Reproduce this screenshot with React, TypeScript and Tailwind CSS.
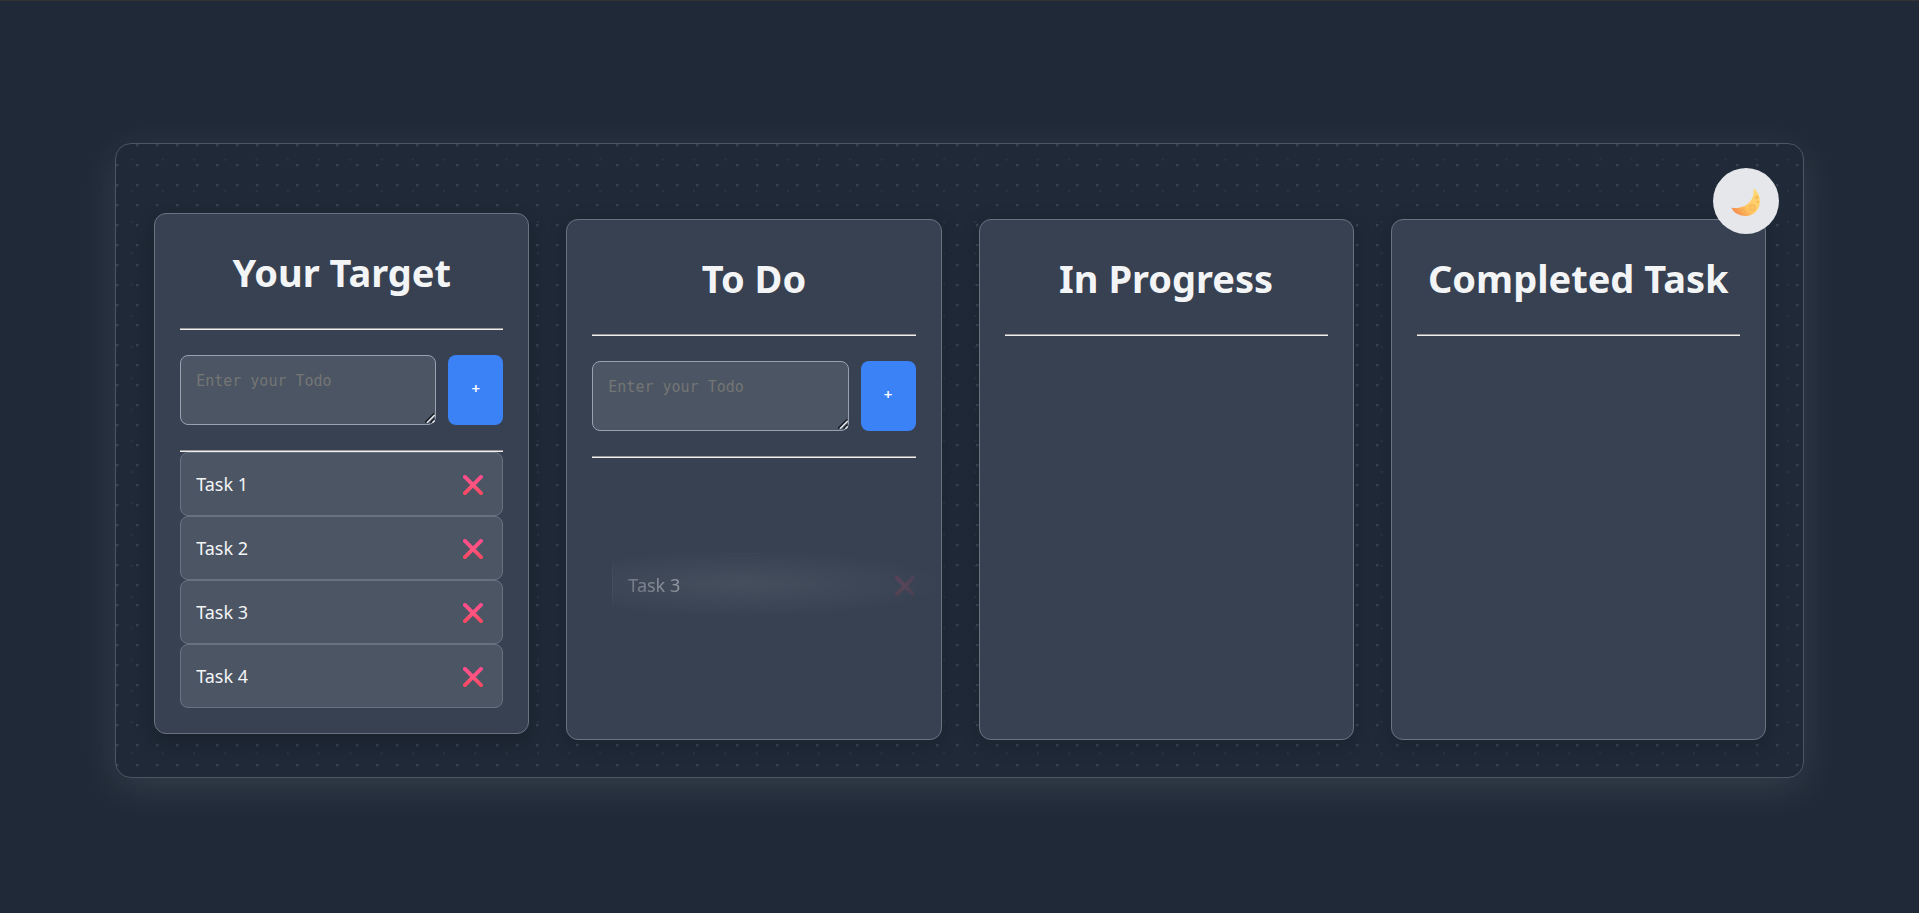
import { useState } from "react";

const CrossIcon = () => (
  <svg viewBox="0 0 20 20" className="block size-5" aria-hidden="true">
    <defs>
      <linearGradient id="cross" x1="0" y1="0" x2="0" y2="1">
        <stop offset="0" stopColor="#ff4a8c" />
        <stop offset="0.5" stopColor="#ff5580" />
        <stop offset="1" stopColor="#f8465c" />
      </linearGradient>
    </defs>
    <path
      d="M0.6 0.6a1.9 1.9 0 0 1 2.7 0L10 7.3l6.700-6.700a1.900 1.900 0 0 1 2.700 2.700L12.700 10l6.700 6.700a1.900 1.900 0 0 1-2.700 2.700L10 12.700l-6.700 6.700a1.900 1.900 0 0 1-2.700-2.700L7.300 10 0.600 3.300a1.900 1.900 0 0 1 0-2.700z"
      fill="url(#cross)"
    />
  </svg>
);

const MoonIcon = () => (
  <svg viewBox="0 0 30 30" className="block size-[30px]" aria-hidden="true">
    <defs>
      <linearGradient id="moon" x1="0.9" y1="0.2" x2="0.1" y2="0.9">
        <stop offset="0" stopColor="#ffd873" />
        <stop offset="0.55" stopColor="#ffc763" />
        <stop offset="1" stopColor="#f6894c" />
      </linearGradient>
    </defs>
    <path
      d="M22.500 1.500c-0.200-0.800 0.600-1.100 1-0.600C26.900 3.900 29 8 29 13 29 21.500 22.800 28 14.800 28 8.800 28 3.300 25 0.900 20.800c-0.400-0.700 0.100-1.300 0.900-1.100C10 21.500 24.200 15.500 22.500 1.500z"
      fill="url(#moon)"
    />
    <g fill="#fbbb58" stroke="#eda84f" strokeWidth="0.7" fillOpacity="0.5">
      <circle cx="21.500" cy="19.500" r="2.900" />
      <circle cx="12" cy="23.500" r="1.700" />
      <circle cx="25.800" cy="9.500" r="1.300" />
      <circle cx="26.500" cy="14" r="0.800" />
    </g>
  </svg>
);

const ResizeGrip = () => (
  <svg
    viewBox="0 0 10 10"
    className="pointer-events-none absolute right-px bottom-0.5 size-2.5"
    aria-hidden="true"
  >
    <path d="M0 9.500L9 0.500M5.500 9.500L9.500 5.500" stroke="#15191f" strokeWidth="1.300" />
    <path d="M2 9.700L9.700 2M7.500 9.700L9.700 7.500" stroke="#e5e7eb" strokeWidth="1.500" />
  </svg>
);

const Rule = () => (
  <hr className="h-0 border-t border-b border-t-[#9a9a9a] border-b-[#eeeeee]" />
);

function TaskCard({ name }: { name: string }) {
  return (
    <div className="flex h-16 items-center justify-between rounded-lg border border-gray-500 bg-[#4b5563] pt-0.5 pr-[19px] pl-[15px] text-[18px] text-gray-100">
      <span>{name}</span>
      <button type="button" aria-label={`Delete ${name}`}>
        <CrossIcon />
      </button>
    </div>
  );
}

function TodoForm({ id }: { id: string }) {
  return (
    <form className="my-[25px] flex gap-3" onSubmit={(e) => e.preventDefault()}>
      <div className="relative flex min-w-0 flex-1">
        <textarea
          id={id}
          aria-label="Enter your Todo"
          placeholder="Enter your Todo"
          className="h-[70px] w-full resize rounded-lg border border-gray-400 bg-[#4b5563] p-[15px] font-['DejaVu_Sans_Mono',monospace] text-[15px] leading-5 text-gray-100 placeholder:text-[#757575] [&::-webkit-resizer]:hidden"
        />
        <ResizeGrip />
      </div>
      <button
        type="submit"
        className="w-[55px] rounded-lg bg-[#3b82f6] pb-0.5 text-[15px] font-semibold text-white"
      >
        +
      </button>
    </form>
  );
}

type ColumnProps = {
  title: string;
  formId?: string;
  tasks?: string[];
  lifted?: boolean;
  children?: React.ReactNode;
};

function Column({ title, formId, tasks = [], lifted, children }: ColumnProps) {
  return (
    <section
      className={`relative min-h-[521px] rounded-xl border border-gray-500 bg-[#374151] p-[25px] ${
        lifted
          ? "-translate-y-1.5 shadow-[0_8px_20px_rgba(0,0,0,0.2)]"
          : "shadow-[0_4px_20px_rgba(0,0,0,0.15)]"
      }`}
    >
      <h1 className="mb-[23px] text-center text-[38px] leading-[66px] font-bold whitespace-nowrap text-gray-100">
        {title}
      </h1>
      <Rule />
      {formId && (
        <>
          <TodoForm id={formId} />
          <Rule />
        </>
      )}
      {tasks.map((t) => (
        <TaskCard key={t} name={t} />
      ))}
      {children}
    </section>
  );
}

export default function App() {
  const [dark, setDark] = useState(true);
  return (
    <main className="flex min-h-screen items-center justify-center border-t border-[#333333] bg-[#1f2937] pt-1.5 font-['Noto_Sans',sans-serif]">
      <div className="relative grid w-[88%] grid-cols-4 gap-[37px] rounded-2xl border border-[#4b5563] bg-[#1f2937] bg-[radial-gradient(circle_at_1px_1px,#374151_1px,transparent_2px),radial-gradient(circle_at_center,#283643_1px,transparent_1px)] bg-[length:20px_20px,calc(125px/4)_calc(125px/4)] pt-[75px] pr-[37px] pb-[37px] pl-[38px] shadow-[0_10px_40px_rgba(255,255,255,0.1)]">
        <Column title="Your Target" formId="target" tasks={["Task 1", "Task 2", "Task 3", "Task 4"]} lifted />
        <Column title="To Do" formId="todo">
          <div className="pointer-events-none absolute top-[333px] left-[45px] w-[323px] opacity-70 [mask-image:radial-gradient(ellipse_210px_34px_at_40%_48%,#000,transparent)]">
            <TaskCard name="Task 3" />
          </div>
        </Column>
        <Column title="In Progress" />
        <Column title="Completed Task" />
        <button
          type="button"
          aria-label="Toggle theme"
          aria-pressed={dark}
          onClick={() => setDark(!dark)}
          className="absolute top-6 right-6 flex size-[66px] items-center justify-center rounded-full bg-gray-200 pt-1"
        >
          <MoonIcon />
        </button>
      </div>
    </main>
  );
}
